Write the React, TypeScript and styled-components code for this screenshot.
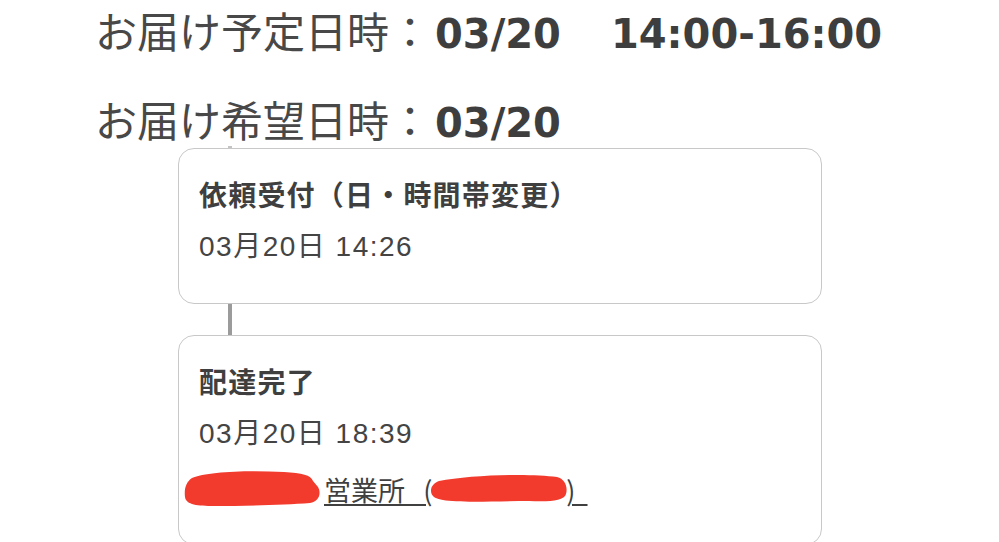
import styled, { createGlobalStyle } from 'styled-components';

const GlobalStyle = createGlobalStyle`
  body {
    margin: 0;
    background: #ffffff;
    font-family: 'Liberation Sans', 'Noto Sans CJK JP', sans-serif;
    color: #404040;
  }
`;

const Page = styled.div`
  width: 999px;
  height: 542px;
  overflow: hidden;
  display: flex;
  flex-direction: column;
`;

const Schedule = styled.div`
  display: flex;
  flex-direction: column;
  gap: 32px;
  padding: 0 0 0 95px;
`;

const ScheduleLine = styled.div<{ $height: number }>`
  display: flex;
  align-items: baseline;
  height: ${(p) => p.$height}px;
  line-height: ${(p) => p.$height}px;
  white-space: nowrap;
`;

const ScheduleLabel = styled.span`
  font-family: 'Noto Sans CJK JP', sans-serif;
  font-size: 42px;
  font-weight: 400;
  color: #484848;
`;

const ScheduleValue = styled.span<{ $gap?: number }>`
  font-family: 'DejaVu Sans', 'Liberation Sans', sans-serif;
  font-size: 40px;
  font-weight: 700;
  color: #3e3e3e;
  margin-left: ${(p) => p.$gap ?? 4}px;
`;

const Timeline = styled.div`
  display: flex;
  flex-direction: column;
  width: 644px;
  margin-left: 178px;
`;

const Connector = styled.div<{ $height: number; $light?: boolean }>`
  width: 4px;
  height: ${(p) => p.$height}px;
  margin-left: 50px;
  background: ${(p) => (p.$light ? '#c4c4c4' : '#9b9b9b')};
`;

const Card = styled.div<{ $height: number }>`
  box-sizing: border-box;
  height: ${(p) => p.$height}px;
  flex-shrink: 0;
  display: flex;
  flex-direction: column;
  gap: 13px;
  padding: 25px 20px 0 20px;
  border: 1.5px solid #c8c8c8;
  border-radius: 16px;
  background: #ffffff;
`;

const EventTitle = styled.div`
  font-family: 'Noto Sans CJK JP', sans-serif;
  font-size: 28px;
  font-weight: 700;
  letter-spacing: 1.2px;
  line-height: 40px;
  color: #3f3f3f;
`;

const EventTime = styled.div`
  font-family: 'Liberation Sans', 'Noto Sans CJK JP', sans-serif;
  font-size: 28px;
  font-weight: 400;
  letter-spacing: 1.5px;
  line-height: 40px;
  color: #444444;
`;

const OfficeLine = styled.div`
  display: flex;
  align-items: center;
  height: 40px;
  margin-top: 2px;
  font-family: 'Noto Sans CJK JP', sans-serif;
  font-size: 27px;
  color: #404040;
  white-space: nowrap;
`;

const OfficeLink = styled.span`
  text-decoration: underline;
  text-decoration-thickness: 1.5px;
  text-underline-offset: 3px;
`;

const Redaction = styled.span<{ $width: number }>`
  position: relative;
  display: inline-block;
  width: ${(p) => p.$width}px;
  height: 40px;
  vertical-align: middle;
`;

const Marker = styled.svg<{ $left: number; $top: number }>`
  position: absolute;
  left: ${(p) => p.$left}px;
  top: ${(p) => p.$top}px;
`;

const markerRed = '#f23a2d';

function Scribble({ variant }: { variant: 'name' | 'detail' }) {
  if (variant === 'name') {
    return (
      <Redaction $width={125}>
        <Marker $left={-15} $top={0} width={138} height={38} viewBox="0 0 138 38">
          <path
            fill={markerRed}
            d="M8 9 C22 3, 60 1, 100 3 C118 4, 127 6, 129 12 L134 18 C138 25, 134 33, 126 34 C100 36, 60 37, 30 37 C14 37, 2 36, 1 28 C0 20, 2 13, 8 9 Z"
          />
        </Marker>
      </Redaction>
    );
  }
  return (
    <Redaction $width={134}>
      <Marker $left={-3} $top={4} width={140} height={30} viewBox="0 0 140 30">
        <path
          fill={markerRed}
          d="M10 8 C40 2, 100 0, 128 4 C136 6, 139 14, 137 21 C135 28, 120 29, 100 28 C70 28, 30 30, 14 27 C8 26, 2 24, 2 18 C2 13, 5 10, 10 8 Z"
        />
      </Marker>
    </Redaction>
  );
}

export default function App() {
  return (
    <>
      <GlobalStyle />
      <Page>
        <Schedule>
          <ScheduleLine $height={60}>
            <ScheduleLabel>お届け予定日時：</ScheduleLabel>
            <ScheduleValue>03/20</ScheduleValue>
            <ScheduleValue $gap={50}>14:00-16:00</ScheduleValue>
          </ScheduleLine>
          <ScheduleLine $height={54}>
            <ScheduleLabel>お届け希望日時：</ScheduleLabel>
            <ScheduleValue>03/20</ScheduleValue>
          </ScheduleLine>
        </Schedule>

        <Timeline>
          <Connector $height={2} $light />
          <Card $height={156}>
            <EventTitle>依頼受付（日・時間帯変更）</EventTitle>
            <EventTime>03月20日 14:26</EventTime>
          </Card>
          <Connector $height={31} />
          <Card $height={210}>
            <EventTitle>配達完了</EventTitle>
            <EventTime>03月20日 18:39</EventTime>
            <OfficeLine>
              <Scribble variant="name" />
              <OfficeLink>営業所&nbsp;&nbsp;&nbsp;(</OfficeLink>
              <Scribble variant="detail" />
              <OfficeLink>)&nbsp;&nbsp;</OfficeLink>
            </OfficeLine>
          </Card>
        </Timeline>
      </Page>
    </>
  );
}
